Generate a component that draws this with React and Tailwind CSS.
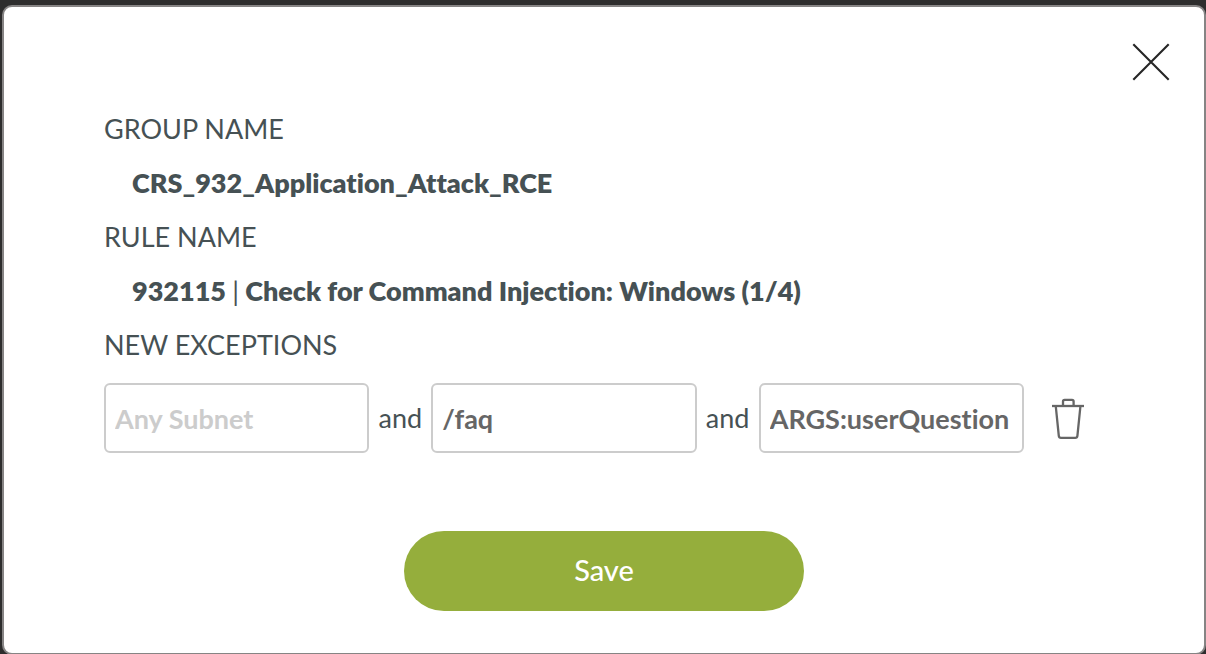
import { useState } from "react";

const fields = [
  { id: "subnet", label: "Subnet", placeholder: "Any Subnet", value: "" },
  { id: "path", label: "Path", placeholder: "Any Path", value: "/faq" },
  { id: "argument", label: "Argument", placeholder: "Any Argument", value: "ARGS:userQuestion" },
];

function CloseIcon() {
  return (
    <svg className="size-[38px]" viewBox="0 0 38 38" fill="none" stroke="#262626" strokeWidth="2.1" aria-hidden="true">
      <path d="M1.3 1.3 36.7 36.7M36.7 1.3 1.3 36.7" />
    </svg>
  );
}

function TrashIcon() {
  return (
    <svg className="h-[42px] w-8" viewBox="0 -2 32 42" fill="none" stroke="#666666" strokeWidth="2.3" aria-hidden="true">
      <path d="M0 7H32" />
      <path d="M11 7V2.4Q11 0.8 12.6 0.8H20Q21.6 0.8 21.6 2.4V7" />
      <path d="M3.8 7.5 6.8 36.8Q7 38.8 9 38.8H23.2Q25.2 38.8 25.4 36.8L28.4 7.5" />
    </svg>
  );
}

function Detail({ name, children }) {
  return (
    <>
      <dt>{name}</dt>
      <dd className="pl-7 font-extrabold">{children}</dd>
    </>
  );
}

function ExceptionField({ field, joined }) {
  const [value, setValue] = useState(field.value);
  return (
    <>
      {joined && <span className="w-[62px] shrink-0 text-center text-[27px]">and</span>}
      <input
        id={field.id}
        type="text"
        aria-label={field.label}
        value={value}
        placeholder={field.placeholder}
        onChange={(e) => setValue(e.target.value)}
        className="h-[70px] min-w-0 flex-1 rounded-md border-2 border-[#cccccc] bg-white px-[9px] text-[27px] font-bold text-[#666666] outline-none placeholder:text-[#cccccc] focus:border-[#95ae3c]"
      />
    </>
  );
}

export default function App() {
  return (
    <div className="flex min-h-screen flex-col bg-[#2d2d2d] pt-[5px] pl-[2px] font-['Lato','Liberation_Sans',sans-serif] text-[#465154] [font-variant-ligatures:none]">
      <main role="dialog" aria-label="New exceptions" className="flex flex-1 flex-col rounded-[10px] border-2 border-[#868484] bg-white pb-[42px]">
        <div className="flex justify-end pt-9 pr-[34px]">
          <button type="button" aria-label="Close">
            <CloseIcon />
          </button>
        </div>
        <form className="flex flex-col pt-[21px]" onSubmit={(e) => e.preventDefault()}>
          <div className="pr-[120px] pl-[100px]">
            <dl className="text-[27px] leading-[54px]">
              <Detail name="GROUP NAME">CRS_932_Application_Attack_RCE</Detail>
              <Detail name="RULE NAME">
                932115 <span className="font-normal">|</span> Check for Command Injection: Windows (1/4)
              </Detail>
            </dl>
            <h2 className="text-[27px] leading-[54px]">NEW EXCEPTIONS</h2>
            <div className="mt-[11px] flex items-center">
              {fields.map((field, i) => (
                <ExceptionField key={field.id} field={field} joined={i > 0} />
              ))}
              <button type="button" aria-label="Delete exception" className="ml-7 shrink-0">
                <TrashIcon />
              </button>
            </div>
          </div>
          <button type="submit" className="mt-[78px] h-20 w-[400px] self-center rounded-full bg-[#95ae3c] pb-0.5 text-[29px] font-medium text-white">
            Save
          </button>
        </form>
      </main>
    </div>
  );
}
